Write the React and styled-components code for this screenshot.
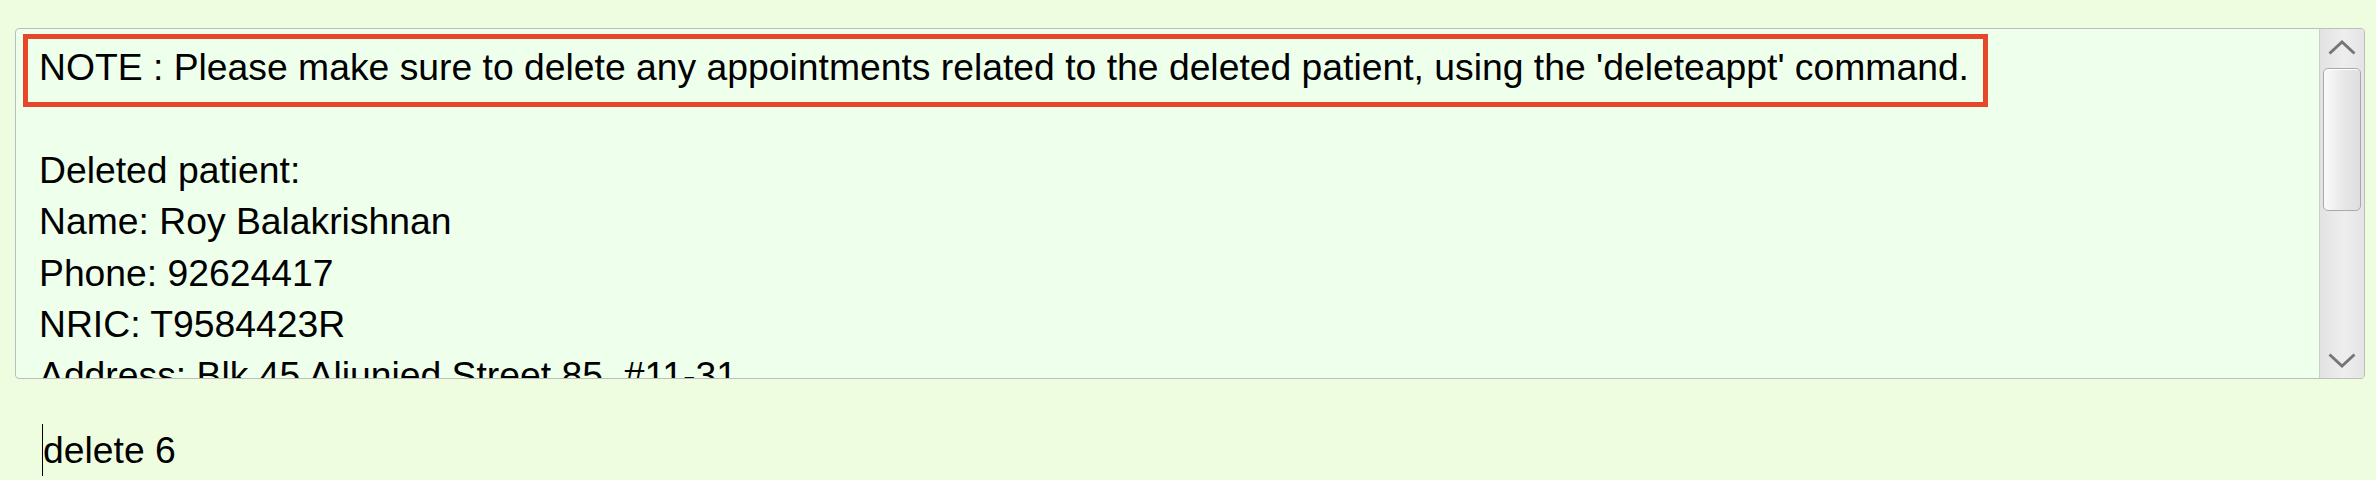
import React from 'react'
import styled, { createGlobalStyle } from 'styled-components'

const GlobalStyle = createGlobalStyle`
    html, body {
        margin: 0;
        padding: 0;
        background: #eefddf;
    }
    body {
        font-family: "Liberation Sans", Arial, sans-serif;
        color: #000;
    }
`

const Page = styled.div`
    width: 2376px;
    height: 480px;
    box-sizing: border-box;
    padding: 28px 11px 0 15px;
    display: flex;
    flex-direction: column;
    overflow: hidden;
`

const ResultBox = styled.div`
    height: 351px;
    flex-shrink: 0;
    box-sizing: border-box;
    border: 1px solid #bdbdbd;
    border-radius: 4px;
    background: #eeffec;
    display: flex;
    overflow: hidden;
`

const Content = styled.div`
    flex: 1;
    padding: 13.4px 0 0 23px;
    font-size: 37.3px;
    line-height: 51.3px;
    overflow: hidden;
`

const Line = styled.div`
    white-space: pre;
    min-height: 51.3px;
`

const Note = styled.span`
    position: relative;
    display: inline-block;
    &::after {
        content: '';
        position: absolute;
        top: -8px;
        bottom: -13px;
        left: -16.3px;
        right: -19px;
        border: 5px solid #e6462a;
        box-sizing: border-box;
        pointer-events: none;
    }
`

const Scrollbar = styled.div`
    width: 45px;
    flex-shrink: 0;
    box-sizing: border-box;
    border-left: 1px solid #cdcdcd;
    background: linear-gradient(to right, #e2e2e2, #eeeeee 55%, #e4e4e4);
    display: flex;
    flex-direction: column;
`

const Arrow = styled.div`
    height: 36px;
    display: flex;
    align-items: center;
    justify-content: center;
    flex-shrink: 0;
`

const Track = styled.div`
    flex: 1;
    box-sizing: border-box;
    padding: 3.3px 3.3px 0;
`

const Thumb = styled.div`
    height: 143px;
    box-sizing: border-box;
    border: 1.5px solid #a9a9a9;
    border-radius: 5px;
    background: linear-gradient(to right, #fafafa, #e8e8e8 55%, #dedede);
    box-shadow: inset 0 1px 0 #ffffff;
`

const CommandBox = styled.div`
    margin-top: 45px;
    padding-left: 26.5px;
    font-size: 37.3px;
    line-height: 52px;
    display: flex;
    align-items: flex-start;
`

const Caret = styled.span`
    display: inline-block;
    width: 1.6px;
    height: 52px;
    background: #000;
`

const Chevron = ({ down }) => (
    <svg width="28" height="15" viewBox="0 0 28 15">
        <path
            d={down ? 'M1.5 1.5 L14 13 L26.5 1.5' : 'M1.5 13.5 L14 2 L26.5 13.5'}
            fill="none"
            stroke="#767676"
            strokeWidth="3"
        />
    </svg>
)

const lines = [
    'Deleted patient:',
    'Name: Roy Balakrishnan',
    'Phone: 92624417',
    'NRIC: T9584423R',
    'Address: Blk 45 Aljunied Street 85, #11-31',
]

const App = () => {
    return (
        <Page>
            <GlobalStyle />
            <ResultBox>
                <Content>
                    <Line>
                        <Note>NOTE : Please make sure to delete any appointments related to the deleted patient, using the 'deleteappt' command.</Note>
                    </Line>
                    <Line />
                    {lines.map((l) => (
                        <Line key={l}>{l}</Line>
                    ))}
                </Content>
                <Scrollbar>
                    <Arrow>
                        <Chevron />
                    </Arrow>
                    <Track>
                        <Thumb />
                    </Track>
                    <Arrow>
                        <Chevron down />
                    </Arrow>
                </Scrollbar>
            </ResultBox>
            <CommandBox>
                <Caret />
                <span>delete 6</span>
            </CommandBox>
        </Page>
    )
}

export default App
